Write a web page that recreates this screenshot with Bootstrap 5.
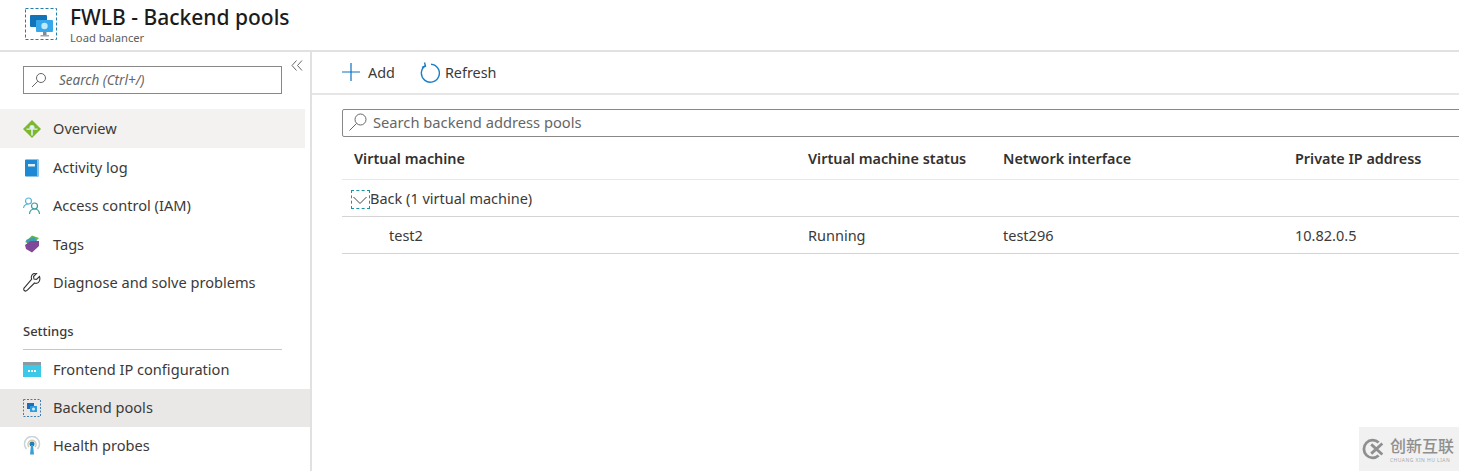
<!DOCTYPE html>
<html>
<head>
<meta charset="utf-8">
<meta name="viewport" content="width=device-width, initial-scale=1">
<link href="https://cdn.jsdelivr.net/npm/bootstrap@5.3.2/dist/css/bootstrap.min.css" rel="stylesheet">
<script src="https://cdn.jsdelivr.net/npm/bootstrap@5.3.2/dist/js/bootstrap.bundle.min.js"></script>
<style>
html,body{height:471px;overflow:hidden;background:#fff}
body{font-family:"Noto Sans","Open Sans",sans-serif;color:#323130;font-size:14.6px;position:relative}
.blade-head{height:52px;border-bottom:2px solid #e1e1e1;padding-left:24px;gap:12px}
.blade-title{font-size:21px;line-height:26px;color:#1b1b1b;margin-top:4px;font-weight:500}
.blade-sub{font-size:11.2px;line-height:14px;color:#605e5c;margin-top:1px}
.blade-body{height:419px}
.side{width:312px;border-right:2px solid #e1e1e1;flex:none;position:relative}
.side-search{margin:14px 28px 0 23px;height:28px;border:1px solid #8a8886;padding-left:7px;gap:12px;font-style:italic;font-size:13.5px;color:#666}
.collapse-btn{position:absolute;left:291px;top:8px;line-height:0}
.menu-list{margin-top:15px}
.menu-row{height:38.4px;padding-left:23px;padding-top:1px;gap:12px;font-size:14.6px;color:#3b3a39}
.menu-row svg{width:18px;height:20px;flex:none}
.row-hover{background:#f3f2f1;margin-right:5px;height:39px}
.row-active{background:#e9e8e7;padding-top:0}
.row-flat{padding-top:0}
.row-tall{height:39px}
.menu-head{font-size:13px;font-weight:500;margin:17px 28px 0 23px;height:31px;line-height:24px;border-bottom:1px solid #c8c6c4;color:#3b3a39}
.main-pane{min-width:0;overflow:hidden}
.tool-strip{height:43px;border-bottom:2px solid #e6e6e6;padding-left:30px;font-size:14.4px;color:#3b3a39;gap:25px}
.tool-item{gap:5px}
.plus-icon{margin-right:3px}
.filter-box{margin:14px -8px 0 30px;height:28px;border:1px solid #8a8886;border-radius:2px;padding-left:5px;padding-bottom:2px;gap:5px;font-size:14.7px;color:#666}
.vm-grid{margin-left:30px;margin-right:-8px}
.vm-line{display:grid;grid-template-columns:454px 195px 292px 1fr;padding-left:12px;padding-top:2px;align-items:center;height:37px;border-bottom:1px solid #d4d4d4;font-size:14.5px;color:#3b3a39}
.vm-top{height:43px;font-weight:600;font-size:14.4px;border-bottom-color:#e8e8e8;color:#323130;padding-top:1px}
.vm-line-group{padding-left:0}
.vm-group{display:flex;padding-left:9px;gap:0}
.vm-name{padding-left:35px}
.toggle-box{width:19px;height:19px;border:1px dashed #1b93a8;flex:none;line-height:0}
.stamp{position:absolute;right:0;bottom:0;width:100px;height:44px;background:#f1f1f1;color:#8f8f8f;padding-left:3px;gap:4px}
.stamp-cn{font-family:"Noto Sans CJK SC",sans-serif;font-size:16px;line-height:23px;font-weight:500}
.stamp-en{font-size:5px;line-height:7px;white-space:nowrap;color:#aaa;letter-spacing:.45px}
</style>
</head>
<body>
<div class="blade-head d-flex align-items-start">
  <svg class="mt-2" width="34" height="32" viewBox="0 0 34 32" fill="none">
    <rect x="1.500" y="0.500" width="31" height="31" stroke="#1f7fa8" stroke-dasharray="3 2"/>
    <rect x="6" y="7" width="17" height="12" rx="1" fill="#1273b9"/>
    <rect x="12" y="12" width="17" height="12" rx="1" fill="#36a7ea"/>
    <circle cx="20.500" cy="18" r="3.200" fill="#bfeaf8"/>
    <rect x="19" y="24" width="3.500" height="3" fill="#7b8c99"/>
    <rect x="16.500" y="27" width="8.500" height="1.500" fill="#9aa7b0"/>
  </svg>
  <div>
    <div class="blade-title">FWLB - Backend pools</div>
    <div class="blade-sub">Load balancer</div>
  </div>
</div>
<div class="blade-body d-flex">
  <div class="side">
    <div class="side-search d-flex align-items-center">
      <svg width="16" height="16" viewBox="0 0 16 16" fill="none" stroke="#666"><circle cx="10" cy="6" r="4.500"/><path d="M6.800 9.200 1 15"/></svg>
      <span>Search (Ctrl+/)</span>
    </div>
    <div class="collapse-btn"><svg width="12" height="11" viewBox="0 0 12 11" fill="none" stroke="#666"><path d="M5.500.5 1 5.500l4.500 5M11 .5 6.500 5.500l4.500 5"/></svg></div>
    <div class="menu-list">
      <div class="menu-row row-hover d-flex align-items-center">
        <svg viewBox="0 0 18 20"><path d="M9 1 18 10 9 19 0 10z" fill="#7eb82e"/><circle cx="9" cy="8.500" r="2.500" fill="#dff1f7"/><path d="M8.200 10h1.600v6.500H8.200zM3.500 9.500h3.500v1.200H3.500zM11 9.500h3.500v1.200H11z" fill="#dff1f7"/></svg>
        <span>Overview</span>
      </div>
      <div class="menu-row d-flex align-items-center">
        <svg viewBox="0 0 18 20"><path d="M2 2.500A1 1 0 0 1 3 1.500h12.500V18.500H3a1 1 0 0 1-1-1z" fill="#1e88d2"/><rect x="14" y="1.500" width="1.500" height="17" fill="#7cc3ef"/><rect x="5" y="6" width="7" height="2.500" fill="#dff1f7"/></svg>
        <span>Activity log</span>
      </div>
      <div class="menu-row d-flex align-items-center">
        <svg viewBox="0 0 18 20" fill="none"><circle cx="5.500" cy="5" r="3" stroke="#59b4d9" stroke-width="1.200"/><path d="M.5 12c.5-3 2.500-4 5-4" stroke="#59b4d9" stroke-width="1.200"/><circle cx="11.500" cy="10" r="3" stroke="#3a9b9f" stroke-width="1.200"/><path d="M6.500 18c.3-3.500 2.500-5 5-5s4.700 1.500 5 5" stroke="#3a9b9f" stroke-width="1.200"/></svg>
        <span>Access control (IAM)</span>
      </div>
      <div class="menu-row d-flex align-items-center">
        <svg viewBox="0 0 18 20"><path d="M9 1.500 16 4 9 11 2 8z" fill="#5ebd3e"/><path d="M3 6 11 3l3 4-8 7z" fill="#3e9bb5"/><path d="M7.500 7 16 7v5l-7 6.500-6-3.500-1-4z" fill="#804998"/></svg>
        <span>Tags</span>
      </div>
      <div class="menu-row d-flex align-items-center">
        <svg viewBox="0 0 18 20" fill="none" stroke="#333" stroke-width="1.100"><path d="M16.500 3.500l-3 3-2.500-.5-.5-2.500 3-3c-2.500-.7-5 .8-5.200 3.500-.1.900.1 1.500.4 2.200L1.500 14.500c-1 1-1 2.300-.2 3 .8.800 2 .7 3-.3L11.500 10c.7.3 1.300.4 2.200.3 2.600-.3 3.800-4 2.800-6.800z"/></svg>
        <span>Diagnose and solve problems</span>
      </div>
      <div class="menu-head">Settings</div>
      <div class="menu-row row-tall d-flex align-items-center">
        <svg viewBox="0 0 18 20"><rect y="2" width="18" height="15" fill="#3cc8e8"/><rect y="2" width="18" height="3" fill="#8a9aa3"/><path d="M5 10h2v2H5zM8 10h2v2H8zM11 10h2v2h-2z" fill="#fff"/></svg>
        <span>Frontend IP configuration</span>
      </div>
      <div class="menu-row row-active d-flex align-items-center">
        <svg viewBox="0 0 18 20" fill="none"><rect x=".5" y="1.500" width="17" height="17" stroke="#3f7fb5" stroke-dasharray="2 1.500"/><rect x="4" y="5" width="7" height="6" fill="#1d6fb5"/><rect x="7" y="8" width="7" height="6" fill="#2f9be0"/><circle cx="10.500" cy="11" r="1.500" fill="#cfeefa"/></svg>
        <span>Backend pools</span>
      </div>
      <div class="menu-row row-flat d-flex align-items-center">
        <svg viewBox="0 0 18 20" fill="none"><path d="M3.500 13A7.500 7.500 0 1 1 14.500 13" stroke="#c9d4da" stroke-width="1.500"/><path d="M6 11A4 4 0 1 1 12 11" stroke="#d8c9a8" stroke-width="1.500"/><circle cx="9" cy="8" r="2.500" fill="#1e7fb8"/><path d="M8 9h2l1 9.500H7z" fill="#3aa0d2"/></svg>
        <span>Health probes</span>
      </div>
    </div>
  </div>
  <div class="main-pane flex-grow-1">
    <div class="tool-strip d-flex align-items-center">
      <div class="tool-item d-flex align-items-center">
        <svg class="plus-icon" width="18" height="18" viewBox="0 0 18 18" stroke="#0b72c4" stroke-width="1.200"><path d="M9 0v18M0 9h18"/></svg>
        <span>Add</span>
      </div>
      <div class="tool-item d-flex align-items-center">
        <svg width="20" height="22" viewBox="0 0 20 22" fill="none" stroke="#1a7fc9" stroke-width="1.400"><path d="M5.500 3.600A9 9 0 1 0 11 2.200"/><path d="M4.500.5 5.500 4 2 5.500"/></svg>
        <span>Refresh</span>
      </div>
    </div>
    <div class="filter-box d-flex align-items-center">
      <svg width="20" height="20" viewBox="0 0 20 20" fill="none" stroke="#666"><circle cx="12.500" cy="7.500" r="5.500"/><path d="M8.500 11.500 1.500 18.500"/></svg>
      <span>Search backend address pools</span>
    </div>
    <div class="vm-grid">
      <div class="vm-line vm-top"><div>Virtual machine</div><div>Virtual machine status</div><div>Network interface</div><div>Private IP address</div></div>
      <div class="vm-line vm-line-group"><div class="vm-group align-items-center"><span class="toggle-box"><svg width="17" height="17" viewBox="0 0 17 17" fill="none" stroke="#444"><path d="M1.500 6 8 12.500 14.500 6"/></svg></span><span>Back (1 virtual machine)</span></div></div>
      <div class="vm-line"><div class="vm-name">test2</div><div>Running</div><div>test296</div><div>10.82.0.5</div></div>
    </div>
  </div>
</div>
<div class="stamp d-flex align-items-center">
  <svg width="24" height="24" viewBox="0 0 26 24" fill="none" stroke="#8f8f8f" stroke-width="3" class="flex-shrink-0"><path d="M18 5A9.500 9.500 0 1 0 18 19"/><path d="M10 7l12 11M22 6 10 17"/></svg>
  <div><div class="stamp-cn">创新互联</div><div class="stamp-en">CHUANG XIN HU LIAN</div></div>
</div>
</body>
</html>
